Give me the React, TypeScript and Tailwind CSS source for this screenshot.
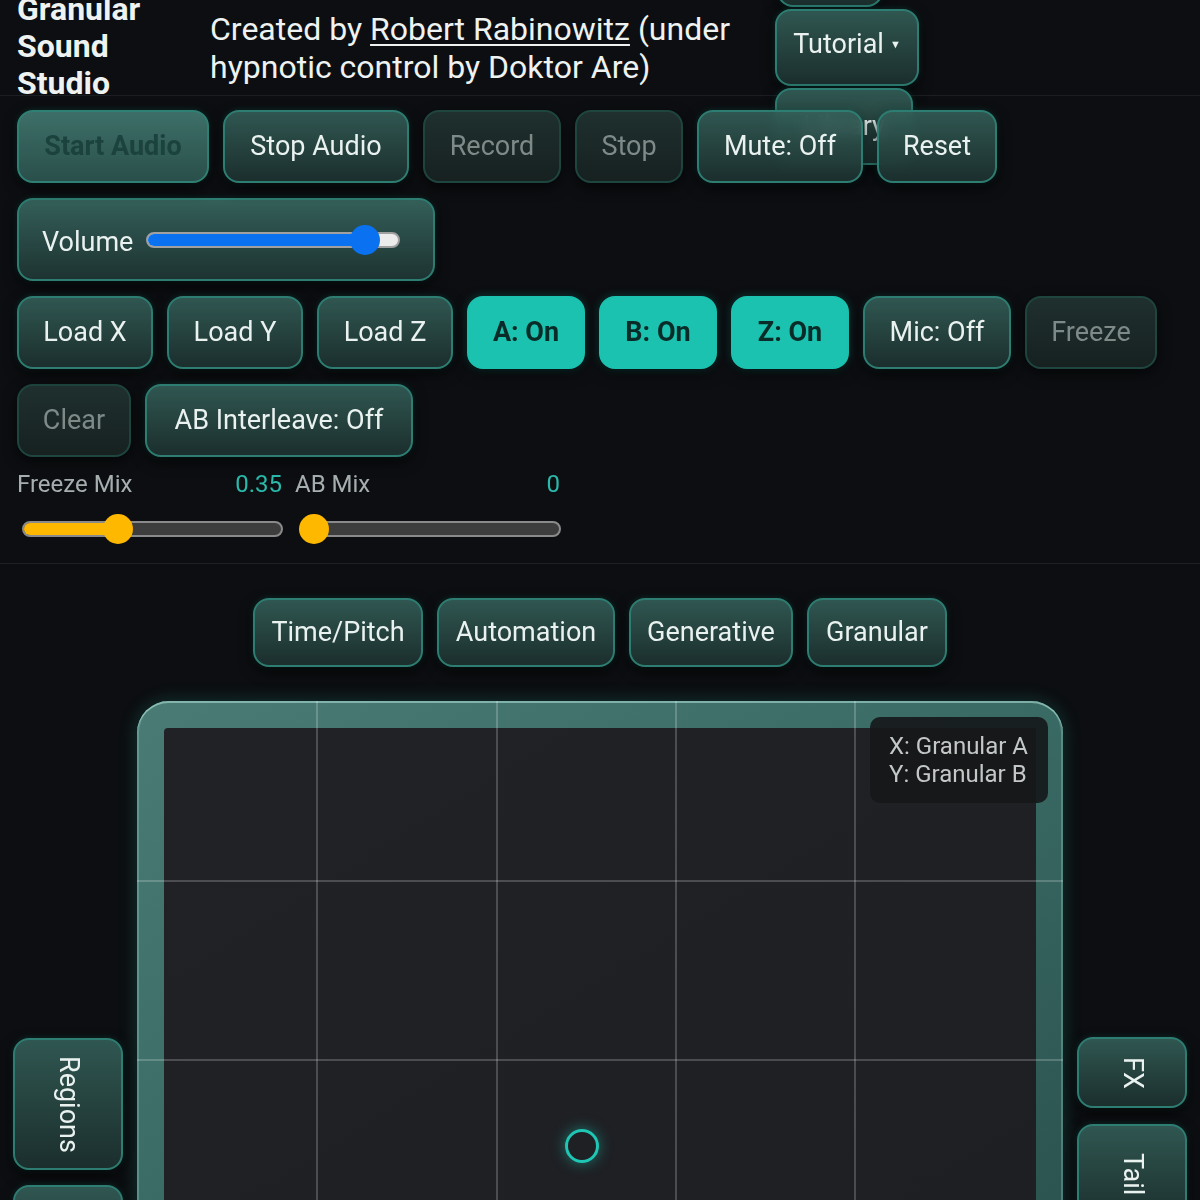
import type { ReactNode } from "react"

type Variant = 'normal' | 'start' | 'off' | 'on'

const variants: Record<Variant, string> = {
  normal: 'border-[#2e7d72] bg-linear-to-b from-[#345f59]/90 to-[#1d3331]/90 text-[#eaf2f0] backdrop-blur-[6px] shadow-[0_5px_14px_rgba(0,0,0,0.7),0_0_6px_rgba(40,190,170,0.22)]',
  start: 'border-[#2f8074] bg-linear-to-b from-[#3d6f68] to-[#2a4f4a] text-[#1c423d] font-bold shadow-[0_5px_14px_rgba(0,0,0,0.7),0_0_6px_rgba(40,190,170,0.22)]',
  off: 'border-[#1f453f] bg-linear-to-b from-[#1f302e] to-[#162120] text-[#7e8a88] shadow-[0_5px_14px_rgba(0,0,0,0.6)]',
  on: 'border-[#1bc2af] bg-[#1bc2af] text-[#0a2c28] font-bold shadow-[0_5px_14px_rgba(0,0,0,0.5),0_0_10px_rgba(27,194,175,0.3)]',
}

function Btn({ children, variant = 'normal', className = '' }: { children: ReactNode, variant?: Variant, className?: string }) {
  return (
    <button className={`flex items-center justify-center whitespace-nowrap rounded-[16px] border-2 px-0 text-[27px] leading-none ${variants[variant]} ${className}`}>
      {children}
    </button>
  )
}

function MixSlider({ label, value, fill }: { label: string, value: string, fill: number }) {
  return (
    <div className="w-[265px]">
      <div className="flex justify-between text-[24px] leading-[26px]">
        <span className="text-[#a7afae]">{label}</span>
        <span className="text-[#2ab9aa]">{value}</span>
      </div>
      <div className="relative mt-[17px] ml-[5px] flex h-[30px] w-[261px] items-center">
        <div className="h-[16px] w-full overflow-hidden rounded-full border-2 border-[#8a8a8a] bg-[#3d3d3d]">
          <div className="h-full bg-[#ffb800]" style={{ width: fill }} />
        </div>
        <div className="absolute top-0 h-[30px] w-[30px] rounded-full bg-[#ffb800]" style={{ left: fill - 15 }} />
      </div>
    </div>
  )
}

export default function App() {
  return (
    <div className="relative min-h-[1200px] overflow-hidden bg-[#0c0e11] font-['Roboto',sans-serif] text-[#eaf2f0]">
      <header className="relative flex h-[96px] border-b border-[#1b1f23] pl-[17px]">
        <h1 className="mt-[-9px] w-[160px] shrink-0 text-[32px] font-bold leading-[37px] text-[#eef2f1]">
          Granular Sound Studio
        </h1>
        <p className="ml-[33px] mt-[10px] w-[570px] text-[32px] leading-[38px] text-[#eef2f1]">
          Created by <span className="underline decoration-2 underline-offset-[4px]">Robert Rabinowitz</span> (under hypnotic control by Doktor Are)
        </p>
        <div className="absolute left-[775px] top-[-70px] flex flex-col items-start gap-[2px]">
          <Btn className="ml-[2px] h-[77px] w-[106px] text-[24px]">Help</Btn>
          <Btn className="h-[77px] w-[144px] text-[24px]">
            <span className="-mt-[6px] flex items-center">Tutorial <span className="ml-[6px] text-[11px]">▼</span></span>
          </Btn>
          <Btn className="h-[77px] w-[138px] text-[24px]">Library</Btn>
        </div>
      </header>

      <div className="relative z-10 px-[17px]">
        <div className="mt-[14px] flex gap-[14px]">
          <Btn variant="start" className="h-[73px] w-[192px]">Start Audio</Btn>
          <Btn className="h-[73px] w-[186px]">Stop Audio</Btn>
          <Btn variant="off" className="h-[73px] w-[138px]">Record</Btn>
          <Btn variant="off" className="h-[73px] w-[108px]">Stop</Btn>
          <Btn className="h-[73px] w-[166px]">Mute: Off</Btn>
          <Btn className="h-[73px] w-[120px]">Reset</Btn>
        </div>

        <div className="mt-[15px] flex h-[83px] w-[418px] items-center rounded-[16px] border-2 border-[#2e7d72] bg-linear-to-b from-[#345f59] to-[#1d3331] pl-[23px] shadow-[0_5px_14px_rgba(0,0,0,0.7),0_0_6px_rgba(40,190,170,0.22)]">
          <span className="mt-[6px] text-[27px]">Volume</span>
          <div className="relative ml-[13px] flex h-[30px] w-[254px] items-center">
            <div className="h-[16px] w-full overflow-hidden rounded-full border-2 border-[#a0a0a0] bg-[#ececec]">
              <div className="h-full w-[219px] bg-[#0a72f0]" />
            </div>
            <div className="absolute left-[204px] top-0 h-[30px] w-[30px] rounded-full bg-[#0a72f0]" />
          </div>
        </div>

        <div className="mt-[15px] flex flex-wrap gap-x-[14px] gap-y-[15px] pr-[10px]">
          <Btn className="h-[73px] w-[136px]">Load X</Btn>
          <Btn className="h-[73px] w-[136px]">Load Y</Btn>
          <Btn className="h-[73px] w-[136px]">Load Z</Btn>
          <Btn variant="on" className="h-[73px] w-[118px]">A: On</Btn>
          <Btn variant="on" className="h-[73px] w-[118px]">B: On</Btn>
          <Btn variant="on" className="h-[73px] w-[118px]">Z: On</Btn>
          <Btn className="h-[73px] w-[148px]">Mic: Off</Btn>
          <Btn variant="off" className="h-[73px] w-[132px]">Freeze</Btn>
          <Btn variant="off" className="h-[73px] w-[114px]">Clear</Btn>
          <Btn className="h-[73px] w-[268px]">AB Interleave: Off</Btn>
        </div>

        <div className="mt-[14px] flex gap-[13px]">
          <MixSlider label="Freeze Mix" value="0.35" fill={96} />
          <MixSlider label="AB Mix" value="0" fill={14} />
        </div>
      </div>

      <div className="mt-[19px] border-t border-[#1d2125]" />

      <nav className="mt-[34px] flex justify-center gap-[14px]">
        <Btn className="h-[69px] w-[170px] text-[25px]">Time/Pitch</Btn>
        <Btn className="h-[69px] w-[178px] text-[25px]">Automation</Btn>
        <Btn className="h-[69px] w-[164px] text-[25px]">Generative</Btn>
        <Btn className="h-[69px] w-[140px] text-[25px]">Granular</Btn>
      </nav>

      <div className="relative ml-[137px] mt-[34px] h-[560px] w-[926px] rounded-t-[32px] bg-linear-to-br from-[#4a7b75] via-[#3a6a64] to-[#2a514d] px-[27px] pt-[27px] shadow-[0_0_18px_rgba(40,180,160,0.25),inset_0_2px_0_rgba(170,220,210,0.6),inset_2px_0_0_rgba(150,210,200,0.35),inset_-2px_0_0_rgba(150,210,200,0.35)]">
        <div className="h-full w-full rounded-tl-[4px] bg-linear-to-br from-[#202226] to-[#1e1f23]" />

        {/* grid */}
        <div className="absolute left-[179px] top-0 h-full w-[2px] bg-white/20" />
        <div className="absolute left-[359px] top-0 h-full w-[2px] bg-white/20" />
        <div className="absolute left-[538px] top-0 h-full w-[2px] bg-white/20" />
        <div className="absolute left-[717px] top-0 h-full w-[2px] bg-white/20" />
        <div className="absolute left-0 top-[179px] h-[2px] w-full bg-white/20" />
        <div className="absolute left-0 top-[358px] h-[2px] w-full bg-white/20" />

        <div className="absolute right-[15px] top-[16px] w-[178px] rounded-[10px] bg-[#15171a]/90 py-[15px] pl-[19px] text-[24px] leading-[28px] text-[#c3c8c7]">
          <div>X: Granular A</div>
          <div>Y: Granular B</div>
        </div>

        <div className="absolute left-[428px] top-[428px] h-[34px] w-[34px] rounded-full border-[3px] border-[#1ec6b3] shadow-[0_0_14px_rgba(30,198,179,0.5)]" />
      </div>

      {/* side tabs */}
      <Btn className="absolute left-[13px] top-[1038px] h-[132px] w-[110px] text-[26px] [writing-mode:vertical-rl]">Regions</Btn>
      <Btn className="absolute left-[13px] top-[1185px] h-[100px] w-[110px] text-[26px] [writing-mode:vertical-rl]">Edit</Btn>
      <Btn className="absolute left-[1077px] top-[1037px] h-[71px] w-[110px] text-[26px] [writing-mode:vertical-rl]">FX</Btn>
      <Btn className="absolute left-[1077px] top-[1124px] h-[100px] w-[110px] text-[26px] [writing-mode:vertical-rl]">Tail</Btn>
    </div>
  )
}
